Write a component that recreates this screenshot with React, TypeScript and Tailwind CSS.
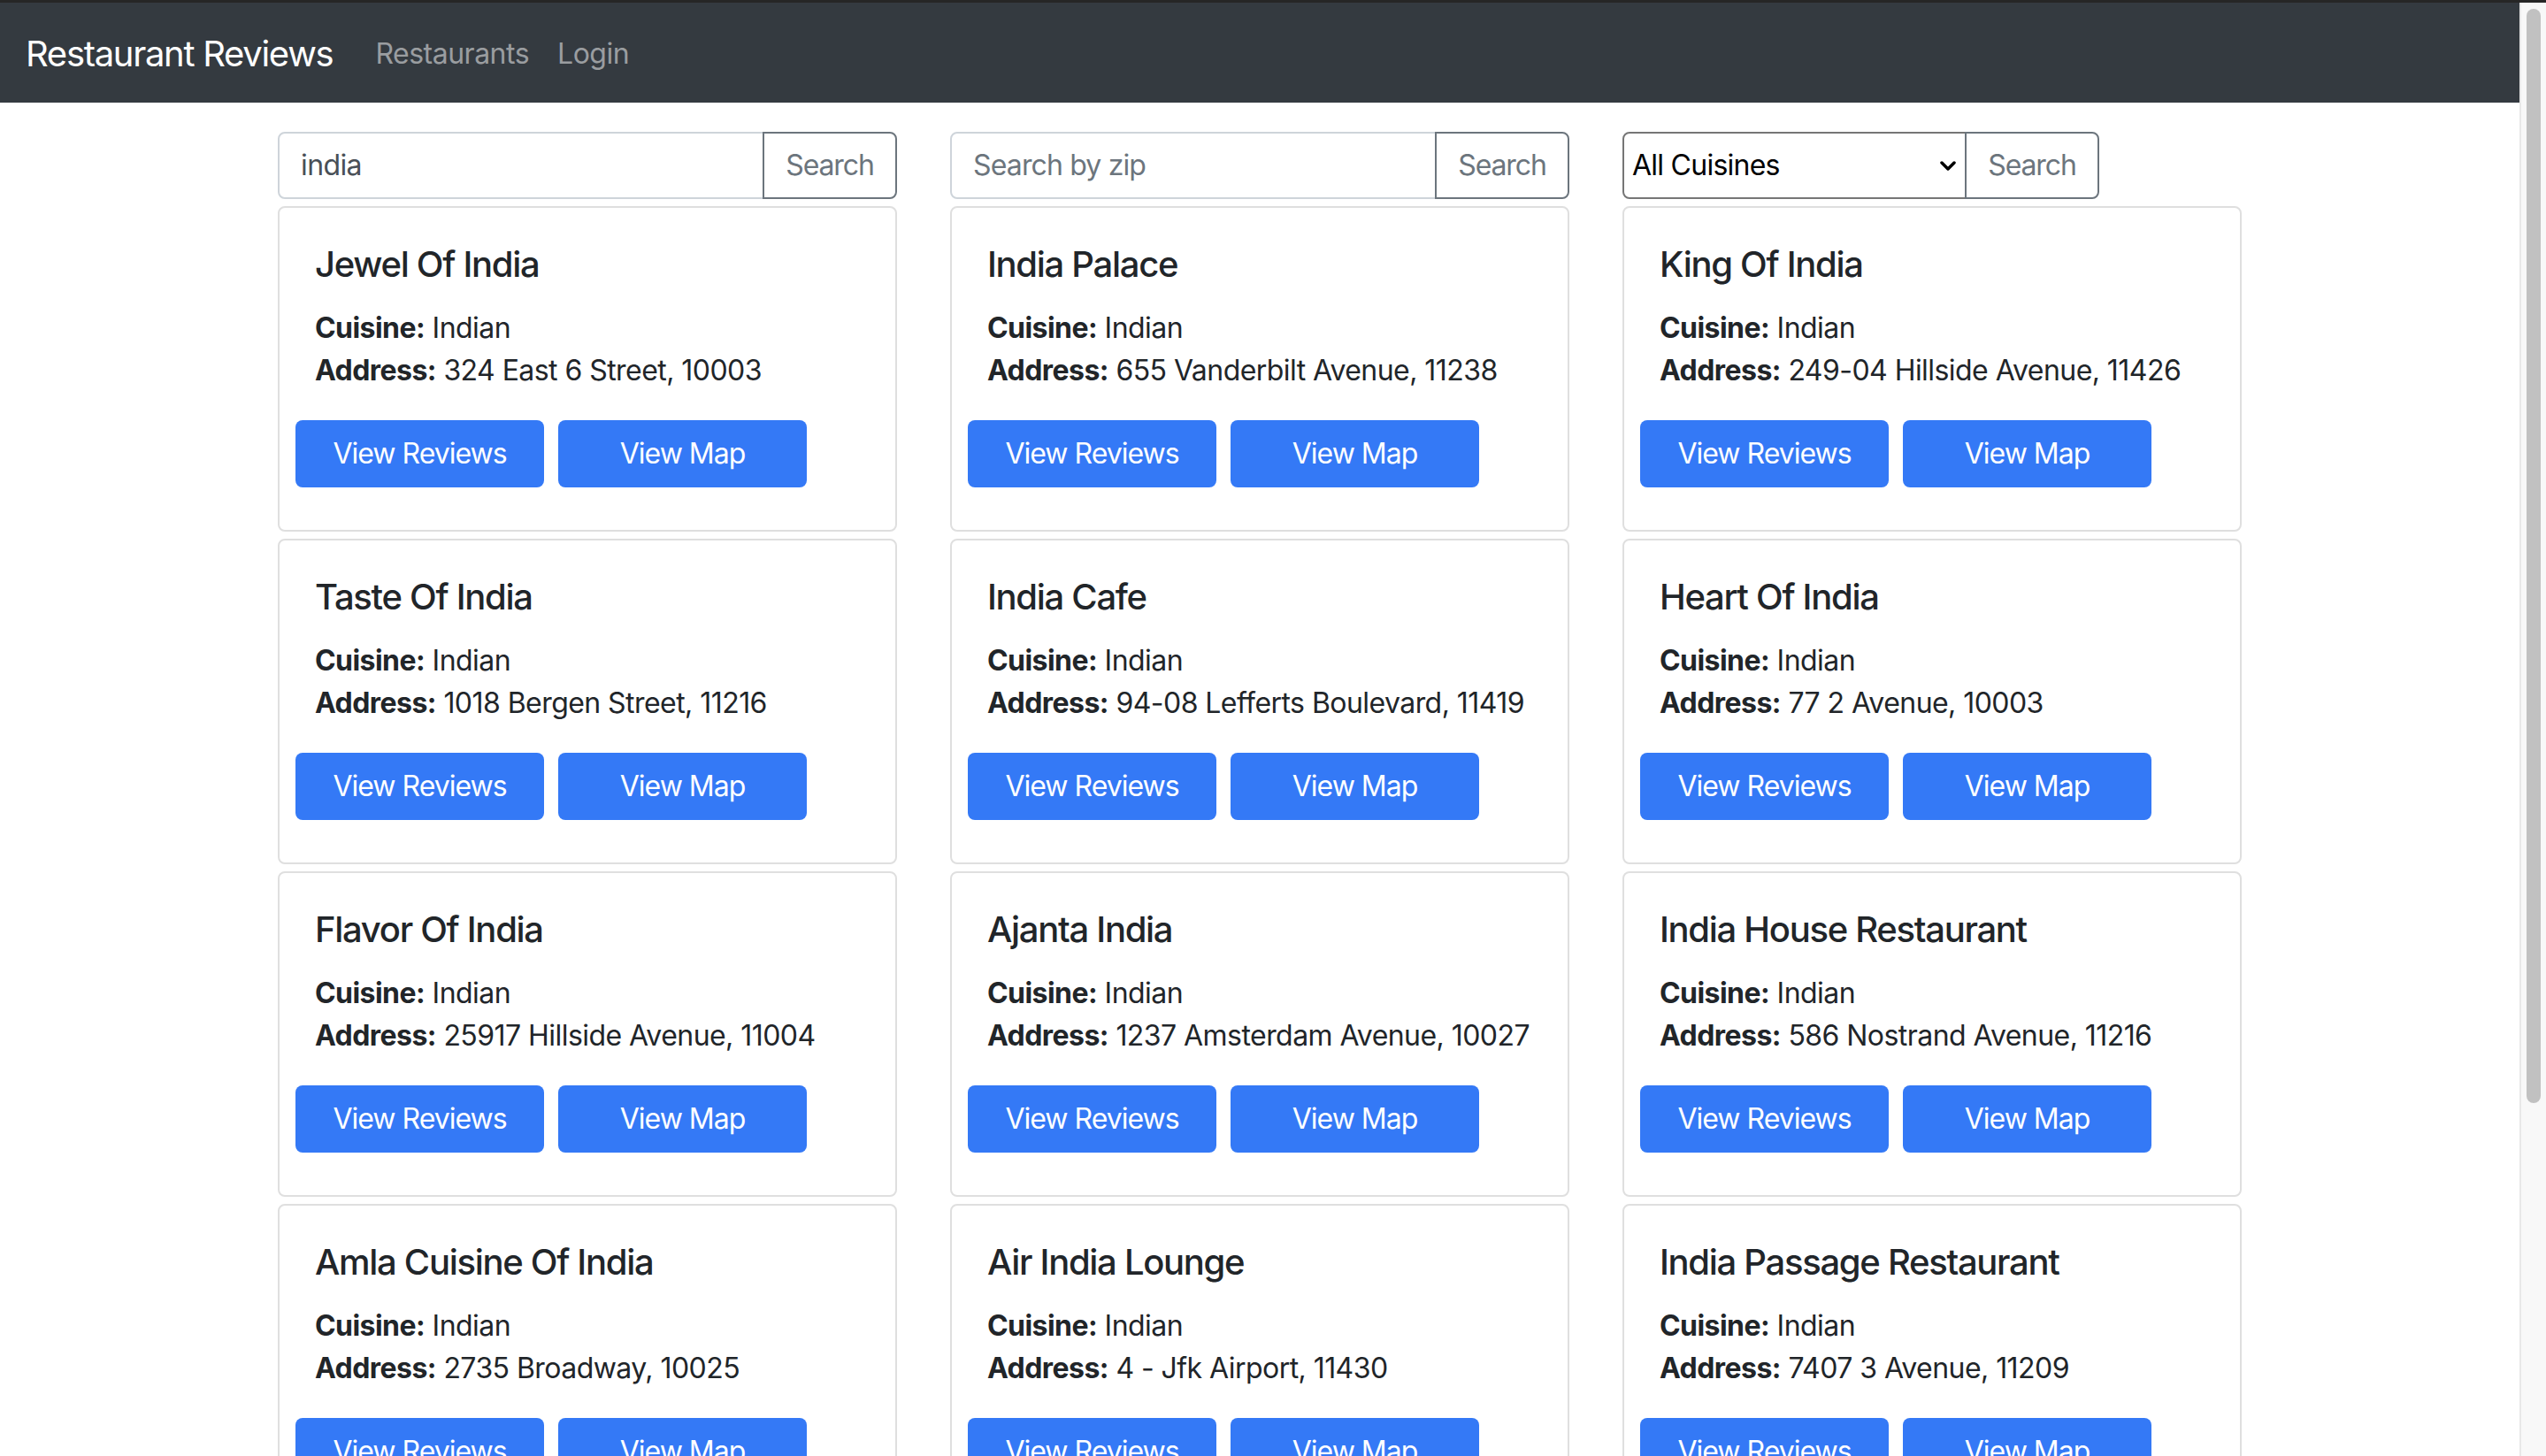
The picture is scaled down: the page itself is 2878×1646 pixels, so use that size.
import React from "react";

type R = { name: string; address: string };

const restaurants: R[] = [
  { name: "Jewel Of India", address: "324 East 6 Street, 10003" },
  { name: "India Palace", address: "655 Vanderbilt Avenue, 11238" },
  { name: "King Of India", address: "249-04 Hillside Avenue, 11426" },
  { name: "Taste Of India", address: "1018 Bergen Street, 11216" },
  { name: "India Cafe", address: "94-08 Lefferts Boulevard, 11419" },
  { name: "Heart Of India", address: "77 2 Avenue, 10003" },
  { name: "Flavor Of India", address: "25917 Hillside Avenue, 11004" },
  { name: "Ajanta India", address: "1237 Amsterdam Avenue, 10027" },
  { name: "India House Restaurant", address: "586 Nostrand Avenue, 11216" },
  { name: "Amla Cuisine Of India", address: "2735 Broadway, 10025" },
  { name: "Air India Lounge", address: "4 - Jfk Airport, 11430" },
  { name: "India Passage Restaurant", address: "7407 3 Avenue, 11209" },
];

function SearchButton() {
  return (
    <div className="w-[152px] h-[76px] -ml-[2px] border-2 border-[#6c757d] rounded-r-[8px] flex items-center justify-center text-[32px] tracking-[-1.1px] text-[#6c757d] shrink-0">
      Search
    </div>
  );
}

function Card({ r }: { r: R }) {
  return (
    <div className="pb-[8px]">
      <div className="border-2 border-[#dfdfdf] rounded-[8px] bg-white p-[40px]">
        <div className="text-[40px] leading-[48px] font-medium tracking-[-1.3px] text-[#212529] mb-[24px] whitespace-nowrap">
          {r.name}
        </div>
        <div className="text-[32px] leading-[48px] tracking-[-0.55px] text-[#212529] mb-[32px] whitespace-nowrap">
          <div>
            <span className="font-bold">Cuisine:</span> Indian
          </div>
          <div>
            <span className="font-bold">Address:</span> {r.address}
          </div>
        </div>
        <div className="flex -mx-[30px] mb-[8px]">
          <div className="w-[281px] h-[76px] mx-[8px] rounded-[8px] bg-[#3479f6] text-white text-[32px] tracking-[-1px] flex items-center justify-center">
            View Reviews
          </div>
          <div className="w-[281px] h-[76px] mx-[8px] rounded-[8px] bg-[#3479f6] text-white text-[32px] tracking-[-1px] flex items-center justify-center">
            View Map
          </div>
        </div>
      </div>
    </div>
  );
}

export default function App() {
  return (
    <div
      className="w-[2878px] h-[1646px] overflow-hidden flex flex-col bg-white"
      style={{ fontFamily: "Inter, 'Noto Sans', sans-serif" }}
    >
      <div className="h-[3px] bg-[#262626] shrink-0" />
      <div className="flex flex-1 min-h-0">
        <div className="flex-1 flex flex-col min-w-0">
          <nav className="h-[113px] bg-[#343a40] flex items-center pl-[29px] pr-[32px] pt-[2px] shrink-0">
            <span className="text-[40px] tracking-[-1.3px] text-white mr-[32px]">Restaurant Reviews</span>
            <span className="text-[32px] tracking-[-0.5px] text-[#9a9da0] px-[16px]">Restaurants</span>
            <span className="text-[32px] tracking-[-0.5px] text-[#9a9da0] px-[16px]">Login</span>
          </nav>
          <div className="w-[2280px] mx-auto px-[30px] mt-[33px]">
            <div className="grid grid-cols-3 gap-x-[60px]">
              <div className="flex pb-[8px]">
                <div className="flex-1 h-[76px] border-2 border-[#ced4da] rounded-l-[8px] flex items-center px-[24px] text-[32px] tracking-[-0.6px] text-[#495057]">
                  india
                </div>
                <SearchButton />
              </div>
              <div className="flex pb-[8px]">
                <div className="flex-1 h-[76px] border-2 border-[#ced4da] rounded-l-[8px] flex items-center px-[24px] text-[32px] tracking-[-0.85px] text-[#6c757d]">
                  Search by zip
                </div>
                <SearchButton />
              </div>
              <div className="flex pb-[8px]">
                <div className="w-[389px] h-[76px] border-2 border-[#767676] rounded-l-[8px] flex items-center justify-between pl-[9px] pr-[10px] text-[32px] tracking-[-0.75px] text-black">
                  <span>All Cuisines</span>
                  <svg width="18" height="12" viewBox="0 0 18 12" className="mt-[2px]">
                    <path d="M2 2 L9 9 L16 2" stroke="#000" strokeWidth="3.5" fill="none" strokeLinecap="round" strokeLinejoin="round" />
                  </svg>
                </div>
                <SearchButton />
              </div>
              {restaurants.map((r) => (
                <Card key={r.name} r={r} />
              ))}
            </div>
          </div>
        </div>
        <div className="w-[30px] shrink-0 bg-[#f8f8f8] border-l-2 border-[#e8e8e8] flex justify-center pt-[7px]">
          <div className="w-[16px] h-[1237px] rounded-full bg-[#c1c1c1]" />
        </div>
      </div>
    </div>
  );
}
